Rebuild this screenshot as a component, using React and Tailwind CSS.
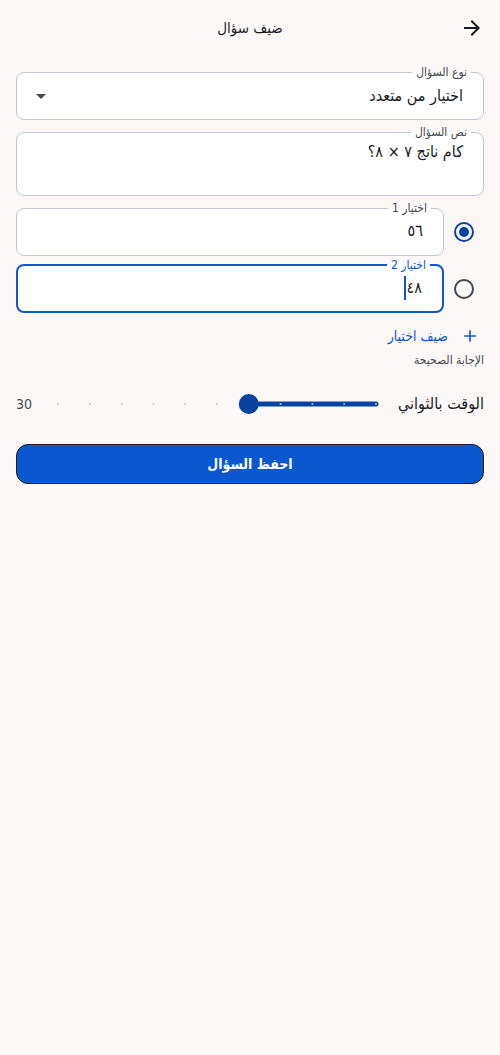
import { useState } from 'react'

const font = { fontFamily: '"DejaVu Sans Condensed", "DejaVu Sans", "Noto Sans", sans-serif' }

function ArrowForward() {
  return (
    <svg width="24" height="24" viewBox="0 0 24 24" className="text-[#1b1b1f]">
      <path fill="currentColor" d="M12 4l-1.41 1.41L16.17 11H4v2h12.17l-5.58 5.59L12 20l8-8z" />
    </svg>
  )
}

function Radio({ checked }) {
  return (
    <svg width="20" height="20" viewBox="0 0 20 20">
      <circle cx="10" cy="10" r="9" fill="none" stroke={checked ? '#0842a0' : '#44474e'} strokeWidth="2" />
      {checked && <circle cx="10" cy="10" r="5" fill="#0842a0" />}
    </svg>
  )
}

function Field({ label, focused, className, children }) {
  return (
    <fieldset
      className={`rounded-lg px-3 bg-white ${focused ? 'border-2 border-[#0b57d0]' : 'border border-[#c4c6d0]'} ${className}`}
    >
      <legend className={`px-1 text-xs leading-4 ${focused ? 'text-[#0b57d0]' : 'text-[#44474e]'}`}>{label}</legend>
      {children}
    </fieldset>
  )
}

function TimeSlider() {
  // 11 ticks, thumb sits on the 7th from the left (RTL slider)
  const ticks = Array.from({ length: 11 }, (_, i) => 18 + i * 31.8)
  const thumb = ticks[6]
  return (
    <svg width="340" height="40" viewBox="0 0 340 40">
      <line x1={thumb} y1="20" x2="336" y2="20" stroke="#0842a0" strokeWidth="5" strokeLinecap="round" />
      {ticks.map((x, i) =>
        i === 6 ? null : (
          <circle key={i} cx={x} cy="20" r="1" fill={i > 6 ? '#a9bdf0' : '#c4c6d0'} />
        )
      )}
      <circle cx={thumb} cy="20" r="10" fill="#0842a0" />
    </svg>
  )
}

export default function App() {
  const [correct, setCorrect] = useState(0)
  const options = [
    { label: 'اختيار 1', value: '٥٦' },
    { label: 'اختيار 2', value: '٤٨', focused: true },
  ]

  return (
    <div dir="rtl" style={font} className="min-h-[1055px] w-full bg-[#fdf8f8] text-[#1b1b1f]">
      <header className="flex h-14 items-center px-4">
        <button className="flex h-6 w-6 items-center justify-center">
          <ArrowForward />
        </button>
        <h1 className="flex-1 pl-6 text-center text-[15px] font-medium">ضيف سؤال</h1>
      </header>

      <main className="flex flex-col px-4 pt-2">
        <Field label="نوع السؤال" className="h-14">
          <div className="flex h-8 items-center">
            <span className="flex-1 pr-2 text-base">اختيار من متعدد</span>
            <svg width="24" height="24" viewBox="0 0 24 24" className="text-[#44474e]">
              <path fill="currentColor" d="M7 10l5 5 5-5z" />
            </svg>
          </div>
        </Field>

        <Field label="نص السؤال" className="mt-1 h-[72px]">
          <p className="pr-2 text-base leading-6">كام ناتج ٧ × ٨؟</p>
        </Field>

        {options.map((opt, i) => (
          <div key={i} className={`flex items-center ${i === 0 ? 'mt-1' : 'mt-px'}`}>
            <button onClick={() => setCorrect(i)} className="flex w-10 shrink-0 items-center justify-center pt-2">
              <Radio checked={correct === i} />
            </button>
            <Field label={opt.label} focused={opt.focused} className="h-14 flex-1">
              <div className="flex h-[30px] items-center pr-2 text-base">
                <span>{opt.value}</span>
                {opt.focused && <span className="mr-px inline-block h-6 w-[2px] bg-[#0b57d0]" />}
              </div>
            </Field>
          </div>
        ))}

        <button className="mt-[11px] flex h-6 items-center gap-3 self-start pr-1 text-sm text-[#0b57d0]">
          <svg width="20" height="20" viewBox="0 0 24 24">
            <path fill="currentColor" d="M19 13h-6v6h-2v-6H5v-2h6V5h2v6h6v2z" />
          </svg>
          <span>ضيف اختيار</span>
        </button>

        <p className="mt-1 text-xs leading-4 text-[#44474e]">الإجابة الصحيحة</p>

        <div className="mt-4 flex h-10 items-center">
          <span className="flex-1 whitespace-nowrap text-base">الوقت بالثواني</span>
          <TimeSlider />
          <span className="w-6 text-left text-sm text-[#44474e]">30</span>
        </div>

        <button className="mt-5 h-10 rounded-xl border border-[#1f1f1f] bg-[#0b57d0] text-sm font-bold text-white">
          احفظ السؤال
        </button>
      </main>
    </div>
  )
}
